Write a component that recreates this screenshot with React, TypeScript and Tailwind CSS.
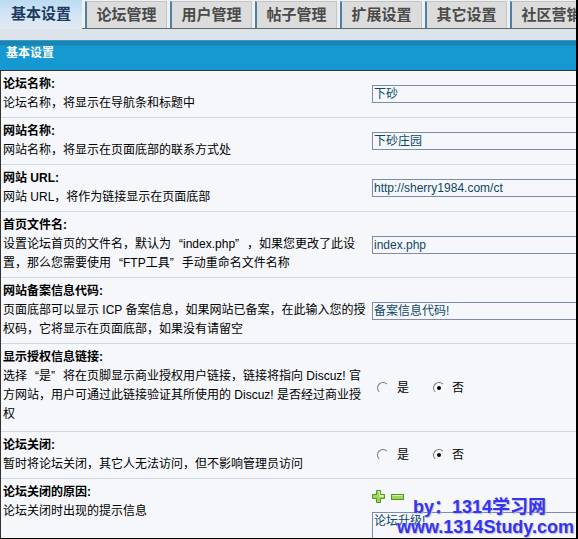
import React from 'react';

// Discuz! 后台 — 基本设置

const TABS = ['论坛管理', '用户管理', '帖子管理', '扩展设置', '其它设置', '社区营销'];

type Row = {
  title: string;
  desc: React.ReactNode[];
  control: 'input' | 'radio' | 'textarea';
  value?: string;
  tall?: boolean;
};

// 全角引号：占一个汉字宽度
const L = () => <span className="inline-block w-[12px] text-right">“</span>;
const R = () => <span className="inline-block w-[12px] text-left">”</span>;

const ROWS: Row[] = [
  { title: '论坛名称:', desc: ['论坛名称，将显示在导航条和标题中'], control: 'input', value: '下砂' },
  { title: '网站名称:', desc: ['网站名称，将显示在页面底部的联系方式处'], control: 'input', value: '下砂庄园' },
  { title: '网站 URL:', desc: ['网站 URL，将作为链接显示在页面底部'], control: 'input', value: 'http://sherry1984.com/ct' },
  {
    title: '首页文件名:',
    desc: [
      <>设置论坛首页的文件名，默认为<L />index.php<R />，如果您更改了此设</>,
      <>置，那么您需要使用<L />FTP工具<R />手动重命名文件名称</>,
    ],
    control: 'input',
    value: 'index.php',
  },
  {
    title: '网站备案信息代码:',
    desc: ['页面底部可以显示 ICP 备案信息，如果网站已备案，在此输入您的授', '权码，它将显示在页面底部，如果没有请留空'],
    control: 'input',
    value: '备案信息代码!',
  },
  {
    title: '显示授权信息链接:',
    desc: [
      <>选择<L />是<R />将在页脚显示商业授权用户链接，链接将指向 Discuz! 官</>,
      '方网站，用户可通过此链接验证其所使用的 Discuz! 是否经过商业授',
      '权',
    ],
    control: 'radio',
    tall: true,
  },
  { title: '论坛关闭:', desc: ['暂时将论坛关闭，其它人无法访问，但不影响管理员访问'], control: 'radio' },
  { title: '论坛关闭的原因:', desc: ['论坛关闭时出现的提示信息'], control: 'textarea', value: '论坛升级!' },
];

function Radio({ checked }: { checked?: boolean }) {
  return (
    <span className="flex h-[12px] w-[12px] items-center justify-center rounded-full border border-t-[#7a7a7a] border-l-[#7a7a7a] border-r-[#f5f7fa] border-b-[#f5f7fa] bg-[#f5f7fa]">
      {checked && <span className="h-[4px] w-[4px] rounded-full bg-black" />}
    </span>
  );
}

function PlusMinus() {
  return (
    <div className="flex items-center gap-[6px]">
      <svg width="13" height="13" viewBox="0 0 13 13">
        <path
          d="M4.5 0.5h4v4h4v4h-4v4h-4v-4h-4v-4h4z"
          fill="#9bd65a"
          stroke="#4f9a1e"
          strokeWidth="1"
        />
        <path d="M5.5 1.5h2v4h4v1h-4" fill="none" stroke="#d4f3a8" strokeWidth="1" />
      </svg>
      <svg width="13" height="6" viewBox="0 0 13 6">
        <rect x="0.5" y="0.5" width="12" height="5" fill="#9bd65a" stroke="#4f9a1e" strokeWidth="1" />
        <line x1="1.5" y1="1.5" x2="11.5" y2="1.5" stroke="#d4f3a8" strokeWidth="1" />
      </svg>
    </div>
  );
}

function Control({ row }: { row: Row }) {
  if (row.control === 'input') {
    return (
      <div className="flex h-[18px] w-[220px] items-center border border-[#7b8cae] bg-[#f5f7fa] pl-[1px] text-[12px] text-[#0f4866]">
        {row.value}
      </div>
    );
  }
  if (row.control === 'radio') {
    return (
      <div className="flex items-center pl-[5px] text-[12px] text-black">
        <Radio />
        <span className="ml-[8px]">是</span>
        <span className="ml-[24px]">
          <Radio checked />
        </span>
        <span className="ml-[7px]">否</span>
      </div>
    );
  }
  return (
    <div className="flex flex-col pt-[11px]">
      <PlusMinus />
      <div className="mt-[9px] h-[40px] w-[220px] border border-[#7b8cae] bg-[#f5f7fa] pl-[1px] pt-[1px] text-[12px] leading-[14px] text-[#0f4866]">
        {row.value}
      </div>
    </div>
  );
}

export default function App() {
  return (
    <div className="relative h-[539px] w-[578px] overflow-hidden border-r-2 border-b border-black bg-[#f5f7fa] font-['Liberation_Sans','Noto_Sans_CJK_SC',sans-serif]">
      {/* 选项卡 */}
      <div className="flex h-[29px] bg-[#eef1f4]">
        <div className="flex h-[29px] w-[82px] shrink-0 items-center justify-center bg-[linear-gradient(to_bottom,#bcdbf1,#d6e7f4_60%,#e2e9f0)] pb-[1px] text-[15px] font-bold text-[#1b3b63]">
          基本设置
        </div>
        <div className="flex flex-1 items-end border-b border-[#5d6d62]">
          {TABS.map((t) => (
            <div
              key={t}
              className="ml-[3px] flex h-[27px] w-[82px] shrink-0 items-center justify-center border-t border-r border-[#c4c4c4] border-l-2 border-l-[#4f7ea3] bg-[#dcdcdc] text-[15px] font-bold text-[#4a4a4a]"
            >
              {t}
            </div>
          ))}
        </div>
      </div>
      <div className="h-[11px] bg-[#dde3ea]" />

      {/* 标题栏 */}
      <div className="h-[30px] bg-[linear-gradient(to_bottom,#4fb0d8_0px,#1b84b4_1px,#1b84b4_5px,#1699d1_6px,#1699d1)] pl-[6px] pt-[6px] text-[12px] leading-[14px] font-bold text-white">
        基本设置
      </div>

      {/* 设置表格 */}
      <div className="border-t border-l border-[#333]">
        {ROWS.map((row) => (
          <div key={row.title} className="flex border-b border-[#cdd8e1] bg-[#f5f7fa]">
            <div
              className={
                row.tall
                  ? 'w-[367px] shrink-0 pt-[4px] pb-[7px] pl-[2px] text-[12px] leading-[19px] text-black'
                  : 'w-[367px] shrink-0 py-[4px] pl-[2px] text-[12px] leading-[19px] text-black'
              }
            >
              <div className="font-bold">{row.title}</div>
              {row.desc.map((d, i) => (
                <div key={i} className="whitespace-nowrap">
                  {d}
                </div>
              ))}
            </div>
            <div
              className={
                row.control === 'textarea'
                  ? 'flex flex-1 items-start pl-[4px]'
                  : 'flex flex-1 items-center pl-[4px]'
              }
            >
              <Control row={row} />
            </div>
          </div>
        ))}
      </div>

      {/* 水印 */}
      <div className="absolute left-[413px] top-[497px] whitespace-nowrap text-[18px] leading-[20px] font-bold text-[#3434f2] [text-shadow:1px_1px_1px_#b8b8d8]">
        by：1314学习网
      </div>
      <div className="absolute left-[397px] top-[517px] whitespace-nowrap text-[18px] leading-[20px] font-bold text-[#3434f2] [text-shadow:1px_1px_1px_#b8b8d8]">
        www.1314Study.com
      </div>
    </div>
  );
}
